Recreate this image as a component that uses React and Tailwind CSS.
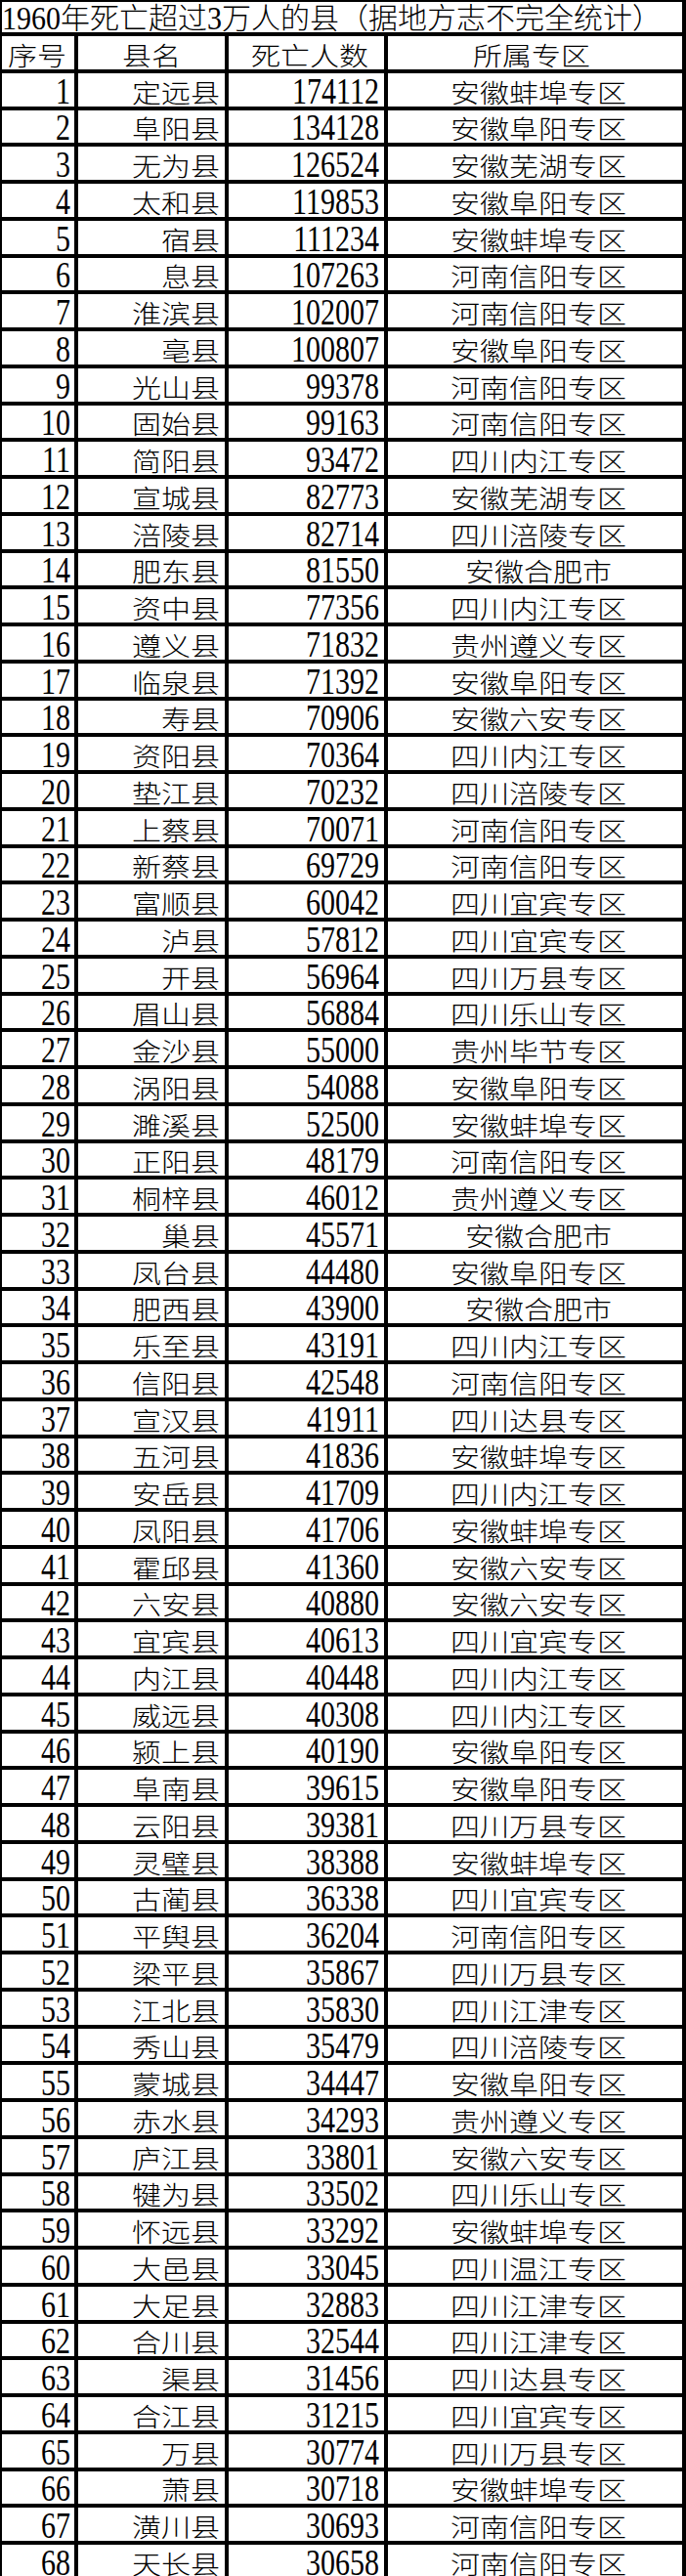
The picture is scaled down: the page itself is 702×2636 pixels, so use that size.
import React from 'react';

const ROWS = [
  ['定远县', '174112', '安徽蚌埠专区'],
  ['阜阳县', '134128', '安徽阜阳专区'],
  ['无为县', '126524', '安徽芜湖专区'],
  ['太和县', '119853', '安徽阜阳专区'],
  ['宿县', '111234', '安徽蚌埠专区'],
  ['息县', '107263', '河南信阳专区'],
  ['淮滨县', '102007', '河南信阳专区'],
  ['亳县', '100807', '安徽阜阳专区'],
  ['光山县', '99378', '河南信阳专区'],
  ['固始县', '99163', '河南信阳专区'],
  ['简阳县', '93472', '四川内江专区'],
  ['宣城县', '82773', '安徽芜湖专区'],
  ['涪陵县', '82714', '四川涪陵专区'],
  ['肥东县', '81550', '安徽合肥市'],
  ['资中县', '77356', '四川内江专区'],
  ['遵义县', '71832', '贵州遵义专区'],
  ['临泉县', '71392', '安徽阜阳专区'],
  ['寿县', '70906', '安徽六安专区'],
  ['资阳县', '70364', '四川内江专区'],
  ['垫江县', '70232', '四川涪陵专区'],
  ['上蔡县', '70071', '河南信阳专区'],
  ['新蔡县', '69729', '河南信阳专区'],
  ['富顺县', '60042', '四川宜宾专区'],
  ['泸县', '57812', '四川宜宾专区'],
  ['开县', '56964', '四川万县专区'],
  ['眉山县', '56884', '四川乐山专区'],
  ['金沙县', '55000', '贵州毕节专区'],
  ['涡阳县', '54088', '安徽阜阳专区'],
  ['濉溪县', '52500', '安徽蚌埠专区'],
  ['正阳县', '48179', '河南信阳专区'],
  ['桐梓县', '46012', '贵州遵义专区'],
  ['巢县', '45571', '安徽合肥市'],
  ['凤台县', '44480', '安徽阜阳专区'],
  ['肥西县', '43900', '安徽合肥市'],
  ['乐至县', '43191', '四川内江专区'],
  ['信阳县', '42548', '河南信阳专区'],
  ['宣汉县', '41911', '四川达县专区'],
  ['五河县', '41836', '安徽蚌埠专区'],
  ['安岳县', '41709', '四川内江专区'],
  ['凤阳县', '41706', '安徽蚌埠专区'],
  ['霍邱县', '41360', '安徽六安专区'],
  ['六安县', '40880', '安徽六安专区'],
  ['宜宾县', '40613', '四川宜宾专区'],
  ['内江县', '40448', '四川内江专区'],
  ['威远县', '40308', '四川内江专区'],
  ['颍上县', '40190', '安徽阜阳专区'],
  ['阜南县', '39615', '安徽阜阳专区'],
  ['云阳县', '39381', '四川万县专区'],
  ['灵璧县', '38388', '安徽蚌埠专区'],
  ['古蔺县', '36338', '四川宜宾专区'],
  ['平舆县', '36204', '河南信阳专区'],
  ['梁平县', '35867', '四川万县专区'],
  ['江北县', '35830', '四川江津专区'],
  ['秀山县', '35479', '四川涪陵专区'],
  ['蒙城县', '34447', '安徽阜阳专区'],
  ['赤水县', '34293', '贵州遵义专区'],
  ['庐江县', '33801', '安徽六安专区'],
  ['犍为县', '33502', '四川乐山专区'],
  ['怀远县', '33292', '安徽蚌埠专区'],
  ['大邑县', '33045', '四川温江专区'],
  ['大足县', '32883', '四川江津专区'],
  ['合川县', '32544', '四川江津专区'],
  ['渠县', '31456', '四川达县专区'],
  ['合江县', '31215', '四川宜宾专区'],
  ['万县', '30774', '四川万县专区'],
  ['萧县', '30718', '安徽蚌埠专区'],
  ['潢川县', '30693', '河南信阳专区'],
  ['天长县', '30658', '河南信阳专区'],
];

// digits and CJK get their own font + vertical squash, laid side by side as flex items
function Runs({ text, title }) {
  const parts = text.split(/(\d+)/).filter(Boolean);
  return parts.map((p, i) =>
    /^\d+$/.test(p) ? (
      <span
        key={i}
        className={`block whitespace-nowrap font-['Liberation_Serif',serif] text-[30px] leading-none origin-[50%_84%] ${
          title ? 'scale-y-[1.12]' : 'scale-y-[1.23]'
        } -mb-[2px]`}
      >
        {p}
      </span>
    ) : (
      <span
        key={i}
        className={`block whitespace-nowrap font-['Noto_Sans_CJK_SC',sans-serif] font-light text-[30px] leading-none origin-bottom ${
          title ? 'scale-y-[0.98]' : 'scale-y-[0.88]'
        } mb-[2px]`}
      >
        {p}
      </span>
    )
  );
}

function Row({ cells, header }) {
  return (
    <div className="grid grid-cols-[78px_154px_163px_1fr] h-[37.76px] border-b-4 border-black text-black">
      <div className={`flex items-end border-r-4 border-black ${header ? 'justify-center pr-[2px]' : 'justify-end pr-[4px]'}`}>
        <Runs text={cells[0]} />
      </div>
      <div className={`flex items-end border-r-4 border-black ${header ? 'justify-center' : 'justify-end pr-[5px]'}`}>
        <Runs text={cells[1]} />
      </div>
      <div className={`flex items-end border-r-4 border-black ${header ? 'justify-center pl-[7px]' : 'justify-end pr-[5px]'}`}>
        <Runs text={cells[2]} />
      </div>
      <div className={`flex items-end justify-center ${header ? 'pr-[7px]' : 'pl-[7px]'}`}>
        <Runs text={cells[3]} />
      </div>
    </div>
  );
}

export default function App() {
  return (
    <div className="w-[702px] h-[2636px] overflow-hidden bg-white">
      <div className="border-l-2 border-t-2 border-r-4 border-black">
        <div className="h-[35px] flex items-end border-b-4 border-black">
          <Runs text="1960年死亡超过3万人的县（据地方志不完全统计）" title />
        </div>
        <Row cells={['序号', '县名', '死亡人数', '所属专区']} header />
        {ROWS.map((r, i) => (
          <Row key={i} cells={[String(i + 1), ...r]} />
        ))}
      </div>
    </div>
  );
}
